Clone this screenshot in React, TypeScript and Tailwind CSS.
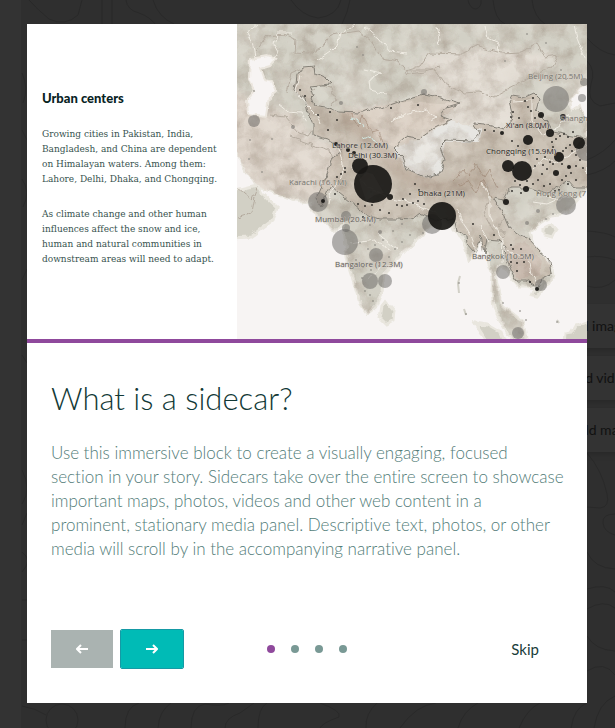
import React from "react";

type Label = { text: string; x: number; y: number; tone: string };

const labels: Label[] = [
  { text: "Beijing (20.5M)", x: 528, y: 79, tone: "#77756f" },
  { text: "Shangh", x: 560, y: 121, tone: "#77756f" },
  { text: "Xi'an (8.0M)", x: 506, y: 128, tone: "#292826" },
  { text: "Chongqing (15.9M)", x: 486, y: 154, tone: "#292826" },
  { text: "Lahore (12.6M)", x: 332, y: 148, tone: "#393835" },
  { text: "Delhi (30.3M)", x: 348, y: 158, tone: "#292826" },
  { text: "Karachi (16.1M)", x: 289, y: 185, tone: "#77756f" },
  { text: "Dhaka (21M)", x: 418, y: 196, tone: "#292826" },
  { text: "Hong Kong (7", x: 536, y: 196, tone: "#77756f" },
  { text: "Mumbai (20.4M)", x: 315, y: 222, tone: "#66645f" },
  { text: "Bangalore (12.3M)", x: 335, y: 267, tone: "#66645f" },
  { text: "Bangkok (10.5M)", x: 472, y: 259, tone: "#66645f" },
];

const paleCities = [
  [254, 121, 6], [556, 99, 13], [582, 98, 4], [318, 202, 10], [345, 242, 13],
  [346, 216, 5], [346, 228, 4], [376, 255, 7], [370, 281, 8], [385, 281, 7],
  [432, 224, 10], [503, 272, 7], [541, 285, 6], [566, 205, 10], [518, 333, 6],
  [584, 82, 4], [587, 150, 11], [424, 92, 3], [293, 127, 2], [341, 103, 2],
  [538, 211, 2], [527, 223, 2], [380, 232, 2], [250, 140, 1],
];

const darkCities = [
  [373, 184, 19], [360, 166, 8], [390, 197, 3], [442, 216, 14], [522, 171, 10],
  [508, 166, 6], [528, 140, 5], [550, 133, 4], [559, 157, 5], [579, 143, 6],
  [541, 115, 3], [563, 117, 3], [502, 133, 2], [506, 202, 3], [556, 173, 3],
  [569, 167, 2], [526, 189, 3], [336, 144, 2], [348, 150, 2], [354, 153, 2],
  [345, 172, 1], [323, 201, 2], [530, 282, 1], [537, 289, 2],
];

const specks = [
  [525, 101], [533, 98], [513, 112], [519, 118], [528, 107], [531, 111], [535, 118], [511, 117],
  [540, 128], [552, 142], [556, 139], [560, 136], [564, 134], [568, 137], [573, 132], [570, 145],
  [566, 148], [572, 151], [576, 155], [563, 151], [553, 147], [548, 151], [545, 157], [550, 162],
  [543, 165], [537, 159], [535, 166], [542, 174], [547, 169], [553, 164], [562, 164], [566, 176],
  [571, 173], [576, 166], [580, 160], [583, 168], [576, 180], [568, 184], [562, 180], [559, 190],
  [550, 184], [544, 186], [538, 180], [533, 184], [527, 181], [520, 185], [515, 181], [512, 191],
  [521, 193], [538, 193], [548, 196], [555, 191], [512, 141], [518, 146], [494, 131], [485, 130],
  [318, 115], [330, 112], [337, 120], [328, 130], [300, 90], [305, 96], [391, 108],
  [358, 204], [365, 206], [372, 205], [380, 210], [389, 213], [397, 205], [402, 206], [407, 205],
  [413, 203], [418, 201], [410, 194], [419, 190], [415, 184], [424, 204], [403, 199], [363, 217],
  [345, 168], [341, 174], [337, 177], [335, 194], [473, 224], [511, 245], [513, 249], [521, 249],
  [511, 262], [517, 263], [524, 262], [530, 255], [494, 235], [517, 271], [418, 105],
];

const palePoints = [
  [357, 47], [363, 55], [505, 61], [546, 43], [527, 34], [561, 70], [566, 79], [371, 192],
  [360, 243], [368, 249], [375, 245], [383, 240], [356, 260], [363, 267], [371, 270], [379, 266],
  [389, 257], [395, 249], [402, 242], [410, 235], [365, 291], [370, 295], [373, 301], [362, 278],
  [402, 224], [393, 231], [370, 225], [423, 233], [262, 172], [249, 159], [272, 139], [254, 91],
  [503, 303], [520, 311], [526, 320], [459, 283], [466, 314], [557, 322], [553, 214], [546, 219],
];

const landPath =
  "M230 16H595V88L579 90L569 102L572 110L583 104L587 112V187L579 199L572 208L560 215L551 216L540 223L529 232L533 244L543 255L552 267L553 279L546 286L537 297L532 296L535 288L526 286L518 286L512 279L507 268L500 266L495 276L499 290L502 304L512 313L523 322L527 345H514L503 326L494 308L492 291L493 277L488 264L485 252L480 239L475 252L469 260L464 244L458 234L452 226L443 219L432 227L419 238L407 249L394 262L384 273L382 292L376 306L367 313L360 303L355 287L349 268L345 246L343 225L334 231L324 220L313 212L308 202L292 199L272 192L260 187L253 181L244 168L237 151H230Z";

const regionPaths = [
  "M297 75L303 67L314 66L315 74L326 79L331 84L311 86L314 95L311 98L314 105L326 107L338 112L358 113L370 108L381 109L391 105L402 101L423 95L440 98L460 104L447 108L441 116L452 120L432 130L419 139L405 137L393 148L403 158L407 169L425 177L439 174L445 160L440 147L447 140L473 141L480 133L473 123L484 124L505 129L513 117L509 102L513 95L525 97L534 93L540 99L537 111L548 122L553 132L578 137L595 144V188L575 188L568 180L548 193L530 188L510 188L504 200L493 198L503 214L509 228L520 236L530 240L539 250L550 260L552 274L543 278L538 287L527 281L517 281L511 270L505 256L506 247L499 240L487 239L484 254L481 235L475 252L467 243L466 236L457 231L454 218L440 221L420 213L411 220L398 219L380 219L365 214L350 202L339 193L330 185L321 207L316 198L326 177L332 158L343 151L327 139L313 135L313 124L308 113L305 99L295 91Z",
];

const paleBorders = [
  "M255 51L267 36L284 34L296 40L295 53L308 54L321 48L331 35L359 31L371 41L382 58L399 61L408 74L425 72L440 67",
  "M407 70L420 66L429 53L464 54L476 46L500 53L521 52L537 44L545 57L558 55L551 67L536 73L518 84L494 97L478 92L464 93L444 84L434 70Z",
  "M289 135L302 141L316 146L330 150L332 160",
  "M270 115L285 117L299 133L308 136L313 129M286 92L291 73L302 68M311 91L320 84L330 87L336 99L331 106",
  "M506 214L498 227L505 235L499 244M486 183L490 200L484 213L493 230L505 232",
  "M237 187L252 200L257 187M255 197L252 213L237 218",
];

const rivers = [
  "M257 25L247 33L253 44L255 58M292 33L277 33L274 45L278 52L271 63",
  "M355 25L340 34L337 45L330 52L317 61M364 26L378 38L389 51L407 53",
  "M437 25L440 40L438 46M485 26L488 38L499 43L498 52M574 26L578 41L586 60",
  "M300 76L296 91L308 106L318 116L321 124",
  "M278 104L288 112L301 113L307 123M365 69L382 73L369 80L370 90L387 94",
  "M389 122L404 114L425 109L436 117L430 121M336 144L343 162L342 178L331 190L328 204",
  "M534 169L546 158L554 164L572 154L587 144M513 102L532 101L532 121L543 136L559 127L566 115L581 120",
  "M352 166L367 187L391 199L413 203L435 213L442 220",
  "M482 183L490 199L490 216L498 231L506 251L529 258L532 275L537 283",
  "M457 209L463 223L471 235L476 252M480 226L489 242M534 202L547 204L558 199L575 195",
  "M350 244L374 240L390 250M378 233L398 249M369 280L381 265",
  "M503 239L502 263M529 288L543 283M546 195L559 201L568 194",
];

function CityMap() {
  return (
    <svg viewBox="237 24 350 315" preserveAspectRatio="xMidYMid slice" className="block h-full w-full" role="img" aria-label="Map of urban centers in Asia">
      <defs>
        <filter id="terrain" x="0" y="0" width="100%" height="100%" colorInterpolationFilters="sRGB">
          <feTurbulence type="fractalNoise" baseFrequency="0.06" numOctaves="5" seed="8" />
          <feColorMatrix values="0 0 0 0 .58  0 0 0 0 .52  0 0 0 0 .46  1.6 0 0 0 -.6" />
        </filter>
        <filter id="highlight" x="0" y="0" width="100%" height="100%" colorInterpolationFilters="sRGB">
          <feTurbulence type="fractalNoise" baseFrequency="0.03" numOctaves="4" seed="15" />
          <feColorMatrix values="0 0 0 0 .95  0 0 0 0 .93  0 0 0 0 .9  0 1.6 0 0 -.6" />
        </filter>
        <filter id="rough" filterUnits="userSpaceOnUse" x="225" y="12" width="374" height="339" colorInterpolationFilters="sRGB">
          <feTurbulence type="fractalNoise" baseFrequency="0.12" numOctaves="2" seed="4" result="noise" />
          <feDisplacementMap in="SourceGraphic" in2="noise" scale="6" xChannelSelector="R" yChannelSelector="G" />
        </filter>
        <filter id="soft" filterUnits="userSpaceOnUse" x="225" y="12" width="374" height="339"><feGaussianBlur stdDeviation="4" /></filter>
        <clipPath id="land"><path d={landPath} /></clipPath>
      </defs>
      <rect x="237" y="24" width="350" height="315" fill="#f7f4f3" />
      <g filter="url(#rough)">
        <g fill="#d2d0c5" stroke="#e9e6de" strokeWidth="3">
          <path d={landPath} />
          <path d="M230 190H237L257 185L262 194L277 208L273 220L250 237L230 238Z" />
          <path d="M386 301L394 311L393 320L386 324L380 318L382 306ZM544 228L552 224L556 229L551 237L544 235Z" />
          <path d="M475 323L487 325L501 333L506 345H489ZM595 322H587L576 326L572 333L565 334L564 345H595Z" />
        </g>
        <g clipPath="url(#land)">
          <g filter="url(#soft)">
            <path d="M225 85L273 110L295 112L312 136L350 150L330 190L315 202L225 185Z" fill="#dfd6cc" />
            <path d="M407 70L429 53L480 47L558 54L536 73L494 97L530 96L505 128L472 146L447 141L430 188L380 160L343 109L403 101L443 84Z" fill="#e2dcd3" />
          </g>
          {regionPaths.map((path) => <path key={path} d={path} fill="#cbbfb2" opacity=".8" />)}
          <path d="M345 113L402 101L460 104L441 117L452 121L417 139L394 146Z" fill="#dbd0c4" />
          <path d="M393 148L420 139L451 121L482 130L479 142L446 142L440 174L425 178L407 169Z" fill="#e7e6e2" />
          <path d="M509 246L525 241L542 262L540 275L519 280L508 265Z" fill="#c7b8ac" />
          <rect x="225" y="12" width="374" height="339" filter="url(#terrain)" opacity=".6" />
          <rect x="225" y="12" width="374" height="339" filter="url(#highlight)" opacity=".5" />
          <path d="M342 110L354 124L371 137L389 163L413 181L444 188L478 177L490 190" fill="none" stroke="#967b67" strokeWidth="15" opacity=".25" filter="url(#soft)" />
          <path d="M454 180L463 169L470 177L476 163L484 178L489 170L497 188M458 185L468 181L476 193L483 180L491 198M351 114L358 127L363 117L372 132L379 130L384 146" fill="none" stroke="#967b67" strokeWidth="1" opacity=".5" />
          <path d="M350 117L358 119L363 126M363 139L371 136L377 144" fill="none" stroke="#d3e9e4" strokeWidth="1" />
        </g>
        <path d="M250 59L267 56L277 59L270 66L260 69L264 80L272 82L276 91L269 97L266 116L248 114L247 101L254 91L249 78Z" fill="#f7f4f3" stroke="#ebe6de" strokeWidth="2" />
        <path d="M595 84L581 88L570 101L571 110L580 104L583 114L595 128Z" fill="#f7f4f3" stroke="#ebe6de" strokeWidth="1" />
        {paleBorders.map((path) => <path key={path} d={path} fill="none" stroke="#b5aca0" strokeWidth="1" />)}
        {regionPaths.map((path) => <path key={path} d={path} fill="none" stroke="#858178" strokeWidth="1" />)}
        {rivers.map((path) => <path key={path} d={path} fill="none" stroke="#f4f1e9" strokeWidth="1" opacity=".85" />)}
      </g>
      <path d="M460 276L458 283L459 293M464 309L466 315M557 320L559 323" fill="none" stroke="#d2d0c7" strokeWidth="2" />
      {palePoints.map(([x, y]) => <circle key={`${x}-${y}`} cx={x} cy={y} r="1" fill="#85847e" opacity=".65" />)}
      {paleCities.map(([x, y, r]) => <circle key={`${x}-${y}`} cx={x} cy={y} r={r} fill="#666462" opacity=".5" />)}
      {specks.map(([x, y]) => <circle key={`${x}-${y}`} cx={x} cy={y} r="1" fill="#282724" opacity=".9" />)}
      {darkCities.map(([x, y, r]) => <circle key={`${x}-${y}`} cx={x} cy={y} r={r} fill="#181715" opacity=".92" />)}
      <path d="M359 180L366 172L373 174L384 193L375 195L366 201Z" fill="#34322f" opacity=".35" />
      <g fontFamily="'Open Sans', sans-serif" fontSize="8">
        {labels.map(({ text, x, y, tone }) => (
          <text key={text} x={x} y={y} fill={tone} stroke="#d7d0c7" strokeOpacity=".65" strokeWidth="1" paintOrder="stroke">{text}</text>
        ))}
      </g>
    </svg>
  );
}

function Backdrop() {
  return (
    <div className="absolute inset-0 overflow-hidden" aria-hidden="true">
      <svg viewBox="0 0 615 728" preserveAspectRatio="xMinYMin slice" className="h-full w-full" fill="none" stroke="#292929">
        <rect width="21" height="728" fill="#333" stroke="none" />
        <path d="M29 0Q38 10 49 19Q65 27 78 15L82 0M102 0V24M112 0V24M126 0Q127 10 139 13Q150 17 155 24M153 0Q158 17 174 24M291 0Q302 16 318 18Q337 16 341 0M350 0Q348 12 342 24M468 0Q470 9 476 9Q482 7 481 0M493 0Q495 20 505 24M532 0Q534 17 545 24" />
        <path d="M587 38Q600 53 615 55M587 61Q596 70 591 84Q586 101 600 106L615 103M587 160Q604 153 615 140M587 175Q605 171 615 161M587 231Q606 232 615 237M587 257Q602 255 615 260M587 286Q603 291 615 280M587 453Q602 470 607 494Q610 507 600 508L587 507M615 514Q602 514 603 523Q604 532 615 535M587 552Q594 568 615 569M587 589Q606 583 615 592M587 609Q604 599 615 608M587 636Q595 650 615 651M587 671Q604 660 615 675M22 73Q29 88 23 103M22 130L27 140M22 179Q31 192 23 207M22 280L27 269M22 355L27 363M22 470Q32 489 22 504M22 525L27 513M22 552Q33 560 22 572M22 600H27M22 640H27" />
        <path d="M22 706Q35 708 46 715" />
        <circle cx="62" cy="720" r="16" />
        <path d="M125 728Q125 707 139 703M158 728Q159 711 171 703M191 728Q191 706 205 704Q222 707 229 703M225 728Q225 718 240 713L254 703M258 728Q258 708 267 703M320 703Q342 711 339 717Q322 723 320 728M366 728Q365 714 377 703M400 728Q416 705 436 703M458 728Q463 711 478 703M519 728Q527 709 540 703M571 728Q574 708 587 703M594 728Q598 703 615 696" />
      </svg>
      <div className="absolute -right-8 top-[304px] flex w-24 flex-col gap-2">
        <button tabIndex={-1} type="button" className="h-11 whitespace-nowrap bg-[#333] font-[Lato] text-sm text-[#111] shadow-md">Add images</button>
        <button tabIndex={-1} type="button" className="h-11 whitespace-nowrap bg-[#333] font-[Lato] text-sm text-[#111] shadow-md">Add video</button>
        <button tabIndex={-1} type="button" className="h-11 whitespace-nowrap bg-[#333] font-[Lato] text-sm text-[#111] shadow-md">Add map</button>
      </div>
    </div>
  );
}

function Arrow({ direction }: { direction: "left" | "right" }) {
  return (
    <svg viewBox="0 0 12 10" className="h-[10px] w-3" fill="none" stroke="currentColor" strokeWidth="2" aria-hidden="true">
      <path d={direction === "left" ? "M12 5H1M5 1L1 5L5 9" : "M0 5H11M7 1L11 5L7 9"} />
    </svg>
  );
}

export default function App() {
  return (
    <div className="relative min-h-screen overflow-hidden bg-[#2f2f2f] py-6 pl-[27px] pr-7 font-['Lato',sans-serif] [font-variant-ligatures:none]">
      <Backdrop />
      <main role="dialog" aria-labelledby="sidecar-title" className="relative mx-auto max-w-[600px] bg-white">
        <section className="flex aspect-video">
          <div className="flex w-3/8 flex-col justify-center px-[15px] pb-2">
            <h2 className="mb-5 font-['Lato',sans-serif] text-[13px] leading-4 font-black text-[#08231f]">Urban centers</h2>
            <div className="space-y-5 whitespace-nowrap font-['DejaVu_Serif_Condensed','DejaVu_Serif',serif] text-[10px] leading-[15px] text-[#37534f]">
              <p>Growing cities in Pakistan, India,<br />Bangladesh, and China are dependent<br />on Himalayan waters. Among them:<br />Lahore, Delhi, Dhaka, and Chongqing.</p>
              <p>As climate change and other human<br />influences affect the snow and ice,<br />human and natural communities in<br />downstream areas will need to adapt.</p>
            </div>
          </div>
          <div className="w-5/8 overflow-hidden"><CityMap /></div>
        </section>
        <section className="border-t-4 border-[#8f499c] px-6 pb-[35px] pt-8">
          <h1 id="sidecar-title" className="text-[31px] leading-[46px] font-light text-[#123936]">What is a sidecar?</h1>
          <p className="-mr-4 mt-5 min-h-[120px] text-[17px] leading-6 font-light text-[#527c78]">Use this immersive block to create a visually engaging, focused<br />section in your story. Sidecars take over the entire screen to showcase<br />important maps, photos, videos and other web content in a<br />prominent, stationary media panel. Descriptive text, photos, or other<br />media will scroll by in the accompanying narrative panel.</p>
          <footer className="mt-[69px] grid grid-cols-3 items-center">
            <div className="flex gap-2">
              <button type="button" disabled aria-label="Previous" className="flex h-[38px] w-[62px] items-center justify-center bg-[#aab3b1] text-white"><Arrow direction="left" /></button>
              <button type="button" aria-label="Next" className="flex h-[38px] w-[62px] items-center justify-center rounded-[1px] bg-[#00bbb6] text-white outline outline-[#159aa5]"><Arrow direction="right" /></button>
            </div>
            <div className="flex justify-center gap-4">
              <button type="button" aria-label="Page 1" aria-current="step" className="size-2 rounded-full bg-[#8f499c]" />
              <button type="button" aria-label="Page 2" className="size-2 rounded-full bg-[#799995]" />
              <button type="button" aria-label="Page 3" className="size-2 rounded-full bg-[#799995]" />
              <button type="button" aria-label="Page 4" className="size-2 rounded-full bg-[#799995]" />
            </div>
            <button type="button" className="justify-self-end px-6 text-[15px] leading-6 text-[#183c39]">Skip</button>
          </footer>
        </section>
      </main>
    </div>
  );
}
